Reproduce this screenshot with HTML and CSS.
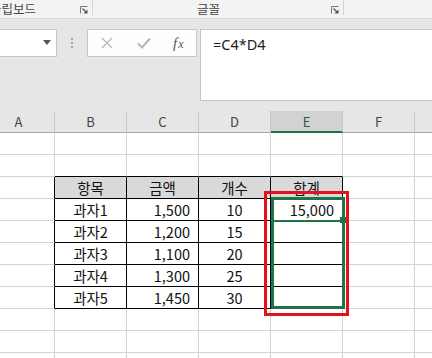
FILE: index.html
```html
<!DOCTYPE html>
<html lang="ko">
<head>
<meta charset="utf-8">
<link rel="stylesheet" href="styles.css">
</head>
<body>
<div class="ribbon">
  <div class="group g1">
    <span class="glabel l1">클립보드</span>
    <svg class="launch" width="8" height="8" viewBox="0 0 8 8"><path d="M0.5 7.5V0.5H7.5" fill="none" stroke="#777" stroke-width="1"/><path d="M2.5 2.5L6 6" stroke="#555" stroke-width="1.2"/><path d="M3.5 7.5H7.5V3.5Z" fill="#555"/></svg>
    <span class="sep"></span>
  </div>
  <div class="group g2">
    <span class="glabel l2">글꼴</span>
    <svg class="launch" width="8" height="8" viewBox="0 0 8 8"><path d="M0.5 7.5V0.5H7.5" fill="none" stroke="#777" stroke-width="1"/><path d="M2.5 2.5L6 6" stroke="#555" stroke-width="1.2"/><path d="M3.5 7.5H7.5V3.5Z" fill="#555"/></svg>
    <span class="sep"></span>
  </div>
</div>
<div class="fbar">
  <div class="namebox">
    <svg class="dd" width="8" height="5" viewBox="0 0 8 5"><path d="M0 0H8L4 5Z" fill="#555"/></svg>
  </div>
  <div class="dots"><span></span><span></span><span></span></div>
  <div class="btns">
    <svg class="ic" width="12" height="12" viewBox="0 0 12 12"><path d="M1 1L11 11M11 1L1 11" stroke="#b8b8b8" stroke-width="1.4"/></svg>
    <svg class="ic" width="14" height="12" viewBox="0 0 14 12"><path d="M1 6.5L5 10.5L13 1.5" fill="none" stroke="#b8b8b8" stroke-width="2"/></svg>
    <span class="fx">f<span class="x">x</span></span>
  </div>
  <div class="formula">=C4*D4</div>
</div>
<div class="sheet">
  <div class="ch">A</div><div class="ch">B</div><div class="ch">C</div><div class="ch">D</div><div class="ch sel">E</div><div class="ch">F</div><div class="ch"></div>

  <div class="c"></div><div class="c"></div><div class="c"></div><div class="c"></div><div class="c"></div><div class="c"></div><div class="c"></div>

  <div class="c"></div><div class="c tt"></div><div class="c tt"></div><div class="c tt"></div><div class="c tt"></div><div class="c"></div><div class="c"></div>

  <div class="c tl"></div><div class="c t th">항목</div><div class="c t th">금액</div><div class="c t th">개수</div><div class="c t th">합계</div><div class="c"></div><div class="c"></div>

  <div class="c tl"></div><div class="c t ctr">과자1</div><div class="c t r">1,500</div><div class="c t ctr">10</div><div class="c t r">15,000</div><div class="c"></div><div class="c"></div>
  <div class="c tl"></div><div class="c t ctr">과자2</div><div class="c t r">1,200</div><div class="c t ctr">15</div><div class="c t r"></div><div class="c"></div><div class="c"></div>
  <div class="c tl"></div><div class="c t ctr">과자3</div><div class="c t r">1,100</div><div class="c t ctr">20</div><div class="c t r"></div><div class="c"></div><div class="c"></div>
  <div class="c tl"></div><div class="c t ctr">과자4</div><div class="c t r">1,300</div><div class="c t ctr">25</div><div class="c t r"></div><div class="c"></div><div class="c"></div>
  <div class="c tl"></div><div class="c t ctr">과자5</div><div class="c t r">1,450</div><div class="c t ctr">30</div><div class="c t r"></div><div class="c"></div><div class="c"></div>

  <div class="c"></div><div class="c"></div><div class="c"></div><div class="c"></div><div class="c"></div><div class="c"></div><div class="c"></div>
  <div class="c"></div><div class="c"></div><div class="c"></div><div class="c"></div><div class="c"></div><div class="c"></div><div class="c"></div>
  <div class="c"></div><div class="c"></div><div class="c"></div><div class="c"></div><div class="c"></div><div class="c"></div><div class="c"></div>

  <div class="selbox"></div>
  <div class="selline"></div>
  <div class="handle"></div>
  <div class="redbox"></div>
</div>
</body>
</html>
```
FILE: styles.css
```css
* { box-sizing: border-box; }
html, body { margin: 0; padding: 0; }
body {
  width: 432px;
  height: 358px;
  overflow: hidden;
  background: #ffffff;
  font-family: "Noto Sans CJK KR", "Noto Sans", sans-serif;
  color: #222;
}
.ribbon {
  height: 19px;
  background: #f3f3f3;
  border-bottom: 1px solid #d6d6d6;
  display: flex;
  align-items: flex-start;
}
.group {
  height: 18px;
  display: flex;
  align-items: flex-start;
}
.g1 { width: 93px; }
.g2 { width: 251px; }
.sep {
  width: 1px;
  height: 15px;
  background: #d4d4d4;
}
.glabel {
  font-size: 12.5px;
  line-height: 18px;
  color: #444;
  white-space: nowrap;
}
.l1 { margin-left: -10px; }
.l2 { margin-left: 104px; }
.launch {
  margin-left: auto;
  margin-right: 4px;
  margin-top: 6px;
}
.fbar {
  height: 92px;
  background: #e6e6e6;
  padding-top: 10px;
  display: flex;
  align-items: flex-start;
}
.namebox {
  margin-left: -10px;
  width: 67px;
  height: 28px;
  background: #fff;
  border: 1px solid #c6c6c6;
  display: flex;
  align-items: center;
  justify-content: flex-end;
  padding-right: 5px;
}
.dd { margin-top: -1px; }
.dots {
  width: 30px;
  height: 28px;
  display: flex;
  flex-direction: column;
  align-items: center;
  justify-content: center;
  gap: 2px;
}
.dots span {
  width: 2px;
  height: 2px;
  background: #a8a8a8;
}
.btns {
  width: 110px;
  height: 28px;
  background: #fdfdfd;
  border: 1px solid #c6c6c6;
  display: flex;
  align-items: center;
  padding-left: 13px;
}
.btns .ic:nth-child(2) { margin-left: 24px; }
.fx {
  margin-left: 22px;
  font-family: "Liberation Serif", serif;
  font-style: italic;
  font-size: 15px;
  color: #555;
  line-height: 1;
}
.fx .x { font-size: 12px; margin-left: 1px; }
.formula {
  margin-left: 3px;
  margin-right: -6px;
  flex: 1;
  height: 72px;
  background: #fff;
  border: 1px solid #c6c6c6;
  padding-left: 12px;
  padding-top: 4px;
  font-family: "Noto Sans", sans-serif;
  font-size: 14.5px;
  line-height: 20px;
  color: #222;
}
.sheet {
  position: relative;
  margin-left: -17px;
  display: grid;
  grid-template-columns: repeat(7, 72px);
  grid-auto-rows: 22px;
}
.ch {
  background: #e6e6e6;
  border-right: 1px solid #c8c8c8;
  border-bottom: 1px solid #a6a6a6;
  font-size: 13px;
  line-height: 21px;
  text-align: center;
  color: #444;
}
.ch.sel {
  background: #d2d2d2;
  border-bottom: 2px solid #217346;
  color: #2d5a3c;
}
.c {
  border-right: 1px solid #d4d4d4;
  border-bottom: 1px solid #d4d4d4;
  font-size: 14.5px;
  line-height: 21px;
  color: #111;
  white-space: nowrap;
}
.tt { border-bottom-color: #000; }
.tl { border-right-color: #000; }
.t { border-right-color: #000; border-bottom-color: #000; }
.th { background: #d9d9d9; text-align: center; }
.ctr { text-align: center; }
.r { text-align: right; padding-right: 8px; }
.selbox {
  position: absolute;
  left: 288px;
  top: 86px;
  width: 74px;
  height: 112px;
  border: 3px solid #217346;
}
.selline {
  position: absolute;
  left: 290px;
  top: 109px;
  width: 68px;
  height: 2px;
  background: #217346;
}
.handle {
  position: absolute;
  left: 357px;
  top: 106px;
  width: 6px;
  height: 6px;
  background: #217346;
}
.redbox {
  position: absolute;
  left: 281px;
  top: 80px;
  width: 85px;
  height: 125px;
  border: 3px solid #e3111b;
}
```
